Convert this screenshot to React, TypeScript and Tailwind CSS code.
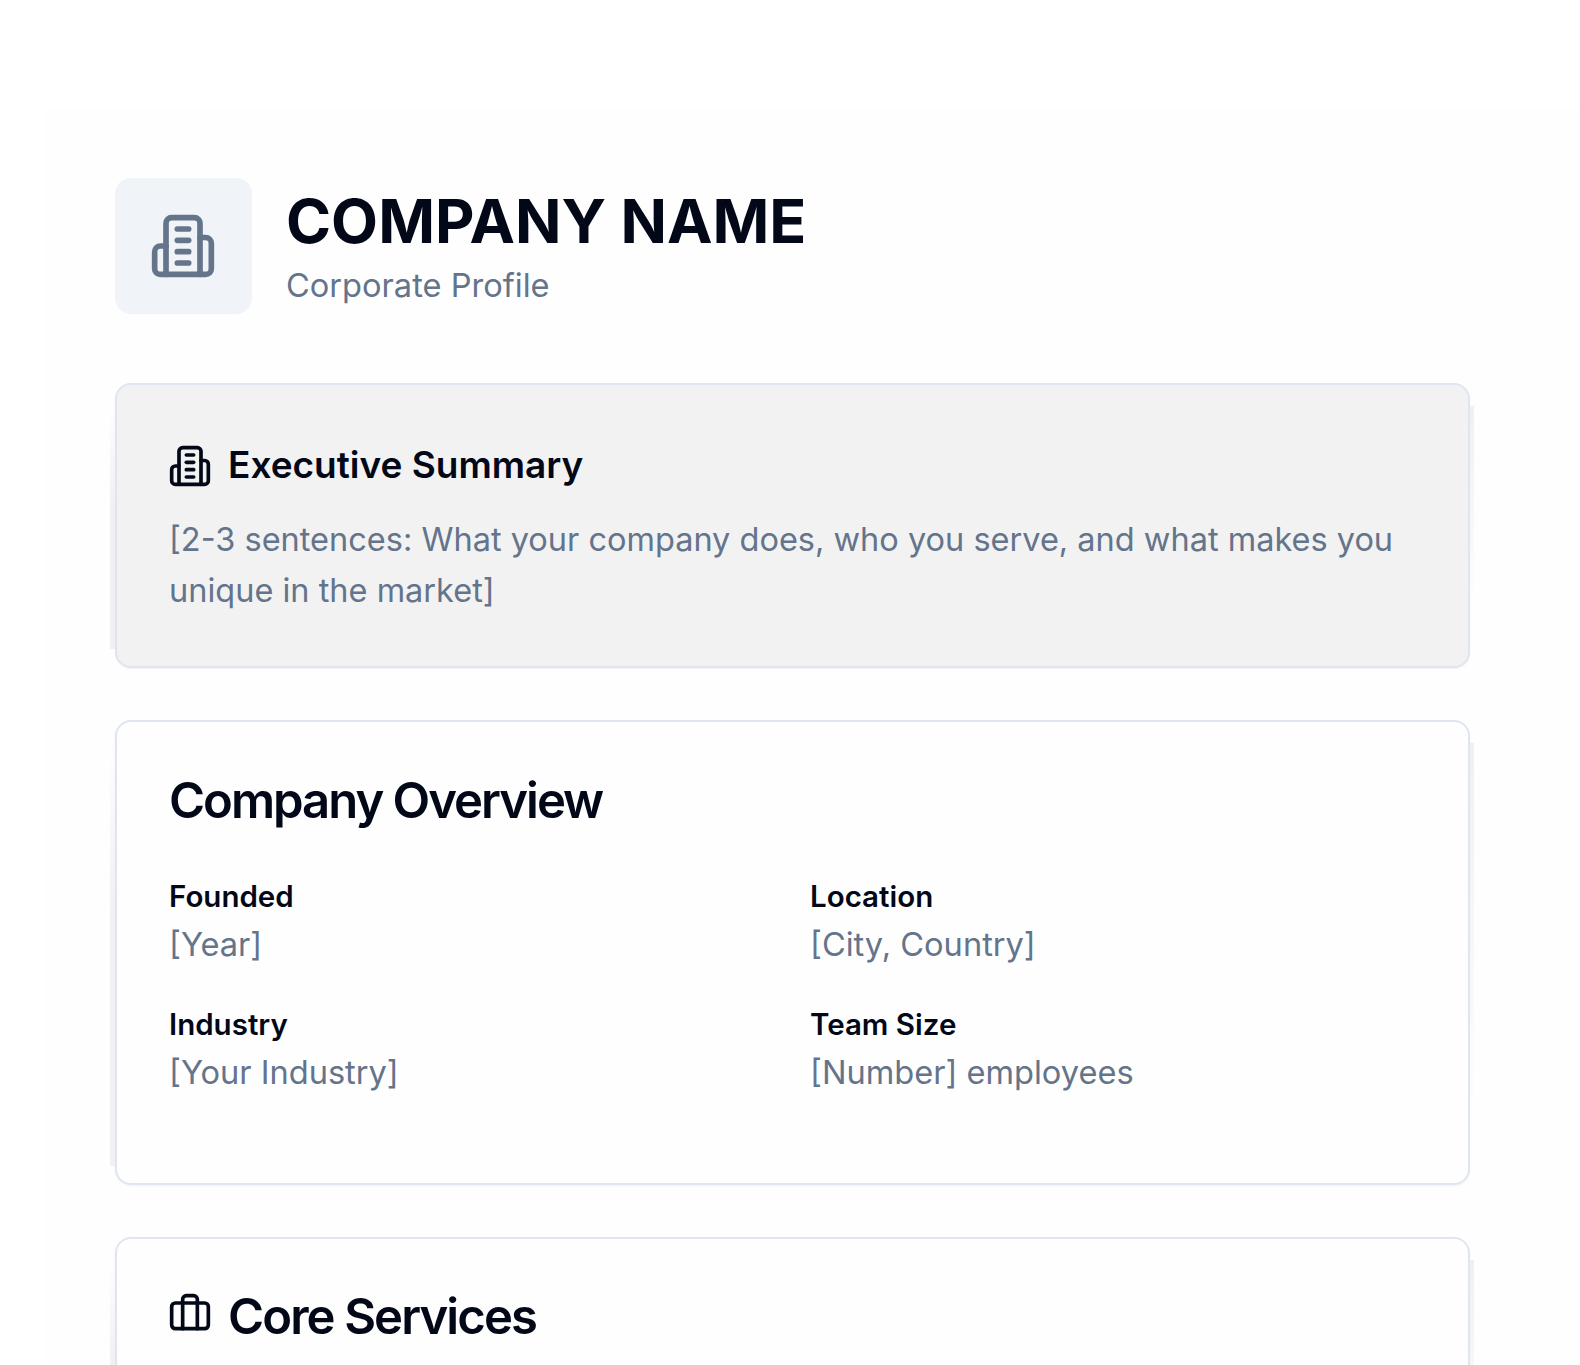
import { Briefcase } from "lucide-react";

const SANS = "font-['Inter','Noto_Sans',sans-serif]";

function BuildingIcon({ className }: { className: string }) {
  return (
    <svg viewBox="0 0 24 24" fill="none" stroke="currentColor" strokeWidth="2" strokeLinecap="round" strokeLinejoin="round" className={className}>
      <path d="M6 22V4a2 2 0 0 1 2-2h8a2 2 0 0 1 2 2v18Z" />
      <path d="M6 12H4a2 2 0 0 0-2 2v6a2 2 0 0 0 2 2h2" />
      <path d="M18 9h2a2 2 0 0 1 2 2v9a2 2 0 0 1-2 2h-2" />
      <path d="M10 6h4" />
      <path d="M10 10h4" />
      <path d="M10 14h4" />
      <path d="M10 18h4" />
    </svg>
  );
}

// faint strips that stick out from behind each card
function EdgeStrips() {
  return (
    <>
      <div className="absolute -left-[7px] top-[20px] bottom-[17px] w-[5px] bg-linear-to-b from-transparent to-[#f1f1f2] to-40%" />
      <div className="absolute -right-[6px] top-[21px] bottom-[52px] w-[4px] bg-linear-to-b from-[#f0f0f1] to-transparent" />
    </>
  );
}

function Field({ label, value }: { label: string; value: string }) {
  return (
    <div>
      <div className="text-[29.5px] leading-[47px] font-semibold text-[#020817]">{label}</div>
      <div className="mt-[1px] text-[32.6px] leading-[47px] text-[#64748b]">{value}</div>
    </div>
  );
}

export default function App() {
  return (
    <div className={`h-[1365px] overflow-hidden bg-white pl-[45px] pt-[108px] ${SANS}`}>
      <div className="h-full bg-[#fefefe] pl-[70px] pr-[110px] pt-[70px]">
        <header className="flex items-start gap-[34px]">
          <div className="flex h-[136px] w-[137px] items-center justify-center rounded-[16px] bg-[#f0f4f8]">
            <BuildingIcon className="-ml-[1px] h-[68px] w-[68px] text-[#64748b]" />
          </div>
          <div className="pt-[9px]">
            <h1 className="text-[61px] leading-[68px] font-bold text-[#020817]">COMPANY NAME</h1>
            <p className="mt-[6px] text-[32.6px] leading-[48px] text-[#64748b]">Corporate Profile</p>
          </div>
        </header>

        <section className="relative mt-[69px] h-[285px] rounded-[16px] border-2 border-[#dfe6f0] bg-[#f2f2f2] px-[52px] pt-[56px] shadow-xs">
          <EdgeStrips />
          <div className="flex items-center gap-[16px]">
            <BuildingIcon className="-ml-[1px] mt-[3px] h-[44px] w-[44px] text-[#020817]" />
            <h2 className="text-[37px] leading-[40px] font-semibold text-[#020817]">Executive Summary</h2>
          </div>
          <p className="mt-[26px] text-[32.5px] leading-[51px] text-[#64748b]">
            [2-3 sentences: What your company does, who you serve, and what makes you unique in the market]
          </p>
        </section>

        <section className="relative mt-[52px] h-[465px] rounded-[16px] border-2 border-[#dfe6f0] px-[52px] pt-[51px] shadow-xs">
          <EdgeStrips />
          <h2 className="text-[49px] leading-[56px] font-semibold tracking-[-2px] text-[#020817]">Company Overview</h2>
          <div className="mt-[44px] grid grid-cols-2 gap-x-[35px] gap-y-[33px]">
            <Field label="Founded" value="[Year]" />
            <Field label="Location" value="[City, Country]" />
            <Field label="Industry" value="[Your Industry]" />
            <Field label="Team Size" value="[Number] employees" />
          </div>
        </section>

        <section className="relative mt-[52px] h-[300px] rounded-[16px] border-2 border-[#dfe6f0] px-[52px] pt-[50px] shadow-xs">
          <EdgeStrips />
          <div className="flex items-center gap-[16px]">
            <Briefcase className="-ml-[1px] mb-[6px] h-[44px] w-[44px] text-[#020817]" strokeWidth={2} />
            <h2 className="text-[49px] leading-[56px] font-semibold tracking-[-1.9px] text-[#020817]">Core Services</h2>
          </div>
        </section>
      </div>
    </div>
  );
}
